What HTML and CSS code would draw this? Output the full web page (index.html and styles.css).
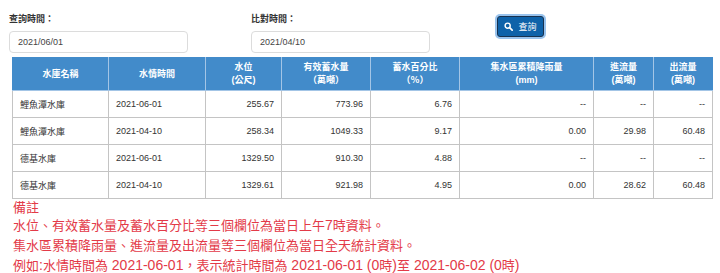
FILE: index.html
```html
<!DOCTYPE html>
<html lang="zh-Hant">
<head>
<meta charset="utf-8">
<link rel="stylesheet" href="styles.css">
</head>
<body>
<div class="page">
  <form class="search">
    <div class="field f1">
      <label class="lbl">查詢時間：</label>
      <div class="input">2021/06/01</div>
    </div>
    <div class="field f2">
      <label class="lbl">比對時間：</label>
      <div class="input">2021/04/10</div>
    </div>
    <button type="button" class="btn">
      <svg class="ico" viewBox="0 0 16 16" width="9" height="9"><circle cx="6.5" cy="6.5" r="4.5" fill="none" stroke="#fff" stroke-width="2.6"/><line x1="10" y1="10" x2="14.5" y2="14.5" stroke="#fff" stroke-width="3" stroke-linecap="round"/></svg>
      <span>查詢</span>
    </button>
  </form>

  <table class="data">
    <colgroup>
      <col style="width:96px"><col style="width:97px"><col style="width:76px"><col style="width:89px"><col style="width:89px"><col style="width:134px"><col style="width:60px"><col style="width:59px">
    </colgroup>
    <thead>
      <tr>
        <th>水庫名稱</th>
        <th>水情時間</th>
        <th>水位<br>(公尺)</th>
        <th>有效蓄水量<br>（萬噸）</th>
        <th>蓄水百分比<br>（％）</th>
        <th>集水區累積降雨量<br>(mm)</th>
        <th>進流量<br>(萬噸)</th>
        <th>出流量<br>(萬噸)</th>
      </tr>
    </thead>
    <tbody>
      <tr><td class="l">鯉魚潭水庫</td><td class="l">2021-06-01</td><td>255.67</td><td>773.96</td><td>6.76</td><td>--</td><td>--</td><td>--</td></tr>
      <tr><td class="l">鯉魚潭水庫</td><td class="l">2021-04-10</td><td>258.34</td><td>1049.33</td><td>9.17</td><td>0.00</td><td>29.98</td><td>60.48</td></tr>
      <tr><td class="l">德基水庫</td><td class="l">2021-06-01</td><td>1329.50</td><td>910.30</td><td>4.88</td><td>--</td><td>--</td><td>--</td></tr>
      <tr><td class="l">德基水庫</td><td class="l">2021-04-10</td><td>1329.61</td><td>921.98</td><td>4.95</td><td>0.00</td><td>28.62</td><td>60.48</td></tr>
    </tbody>
  </table>

  <div class="notes">
    <p class="title">備註</p>
    <p>水位、有效蓄水量及蓄水百分比等三個欄位為當日上午<span class="en">7</span>時資料。</p>
    <p>集水區累積降雨量、進流量及出流量等三個欄位為當日全天統計資料。</p>
    <p>例如<span class="en">:</span>水情時間為<span class="en"> 2021-06-01</span>，表示統計時間為<span class="en"> 2021-06-01 (0</span>時<span class="en">)</span>至<span class="en"> 2021-06-02 (0</span>時<span class="en">)</span></p>
  </div>
</div>
</body>
</html>
```
FILE: styles.css
```css
html, body { margin: 0; padding: 0; background: #fff; }
body {
  font-family: "Liberation Sans", Arial, "Noto Sans CJK TC", sans-serif;
  color: #333;
  font-size: 9px;
}
.page { padding: 12px 0 0 0; }

.search {
  display: flex;
  align-items: flex-start;
  padding-left: 9px;
}
.field { display: flex; flex-direction: column; width: 179px; }
.f2 { margin-left: 63px; }
.lbl {
  font-weight: bold;
  font-size: 9px;
  line-height: 14px;
  height: 14px;
  margin-bottom: 5px;
  color: #333;
}
.input {
  box-sizing: border-box;
  height: 22px;
  border: 1px solid #dcdcdc;
  border-radius: 4px;
  padding: 0 8px;
  line-height: 20px;
  font-size: 9px;
  color: #444;
}
.btn {
  margin-left: 67px;
  margin-top: 4px;
  box-sizing: border-box;
  width: 47px;
  height: 21px;
  display: flex;
  align-items: center;
  justify-content: center;
  gap: 5px;
  background: #0e62a9;
  border: 1px solid #18324f;
  border-radius: 3px;
  box-shadow: 0 0 0 2px rgba(110, 170, 230, 0.7);
  color: #fff;
  font-family: "Liberation Sans", Arial, "Noto Sans CJK TC", sans-serif;
  font-size: 9px;
  padding: 0;
}
.ico { display: block; }

.data {
  margin: 4px 0 0 12px;
  width: 700px;
  table-layout: fixed;
  border-collapse: collapse;
  font-size: 9px;
}
.data th {
  background: #428bca;
  color: #fff;
  font-weight: bold;
  height: 33px;
  line-height: 13px;
  padding: 0 4px;
  box-sizing: border-box;
  border: 1px solid #a3c5e6;
  border-top-color: #428bca;
  text-align: center;
  vertical-align: middle;
}
.data th:first-child { border-left-color: #428bca; }
.data th:last-child { border-right-color: #428bca; }
.data td {
  border: 1px solid #c4c4c4;
  height: 26px;
  padding: 0 7px;
  text-align: right;
  vertical-align: middle;
  color: #333;
}
.data td.l { text-align: left; }

.notes {
  padding-left: 13px;
  color: #e33a48;
  font-family: "Liberation Sans", Arial, "Noto Sans CJK TC", sans-serif;
  font-size: 13px;
}
.notes .en { font-size: 14px; line-height: 1; }
.notes p { margin: 0; line-height: 20px; height: 20px; overflow: visible; white-space: nowrap; }
.notes .title { line-height: 17px; height: 17px; }
```
